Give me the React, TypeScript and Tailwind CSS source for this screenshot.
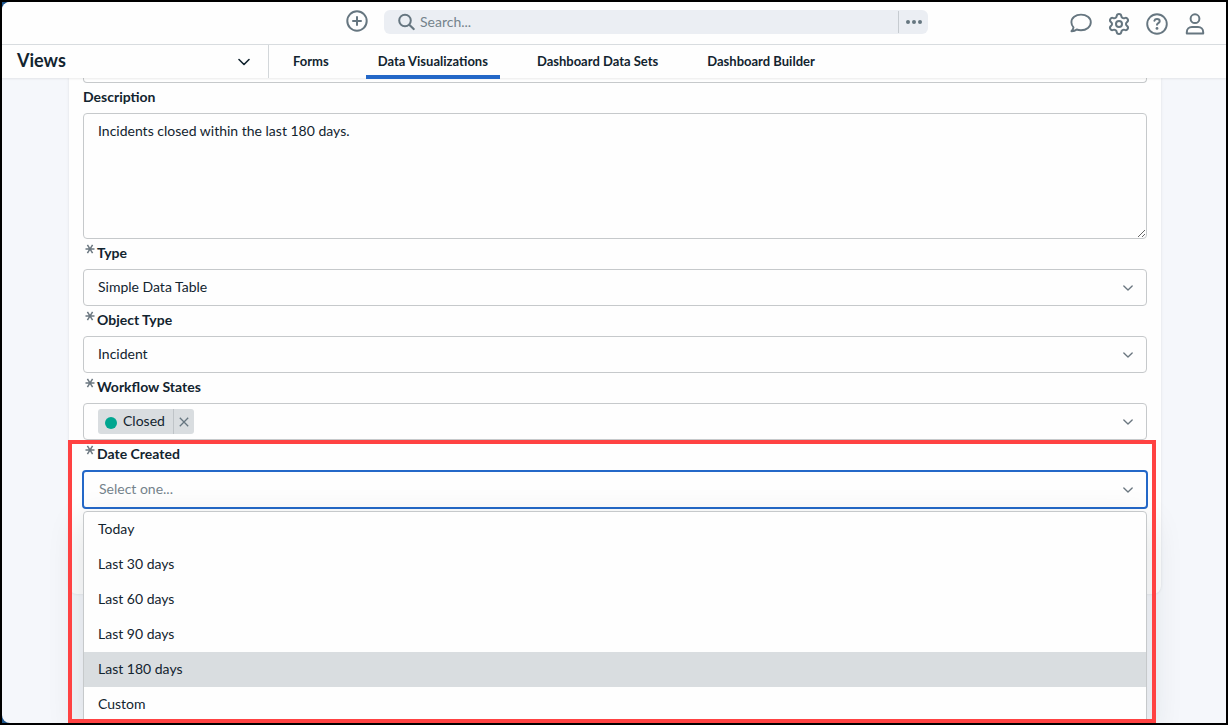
import { useState } from "react";
import type { ReactNode } from "react";
import clsx from "clsx";
import { Settings } from "lucide-react";

const TABS = [
  "Forms",
  "Data Visualizations",
  "Dashboard Data Sets",
  "Dashboard Builder",
];

const DATE_OPTIONS = [
  "Today",
  "Last 30 days",
  "Last 60 days",
  "Last 90 days",
  "Last 180 days",
  "Custom",
];

function Chevron({ className }: { className?: string }) {
  return (
    <svg
      viewBox="0 0 12 8"
      fill="none"
      stroke="currentColor"
      strokeLinecap="round"
      strokeLinejoin="round"
      className={className}
      aria-hidden="true"
    >
      <path d="M1 1.5l5 5 5-5" strokeWidth="1.6" />
    </svg>
  );
}

function PlusIcon() {
  return (
    <svg viewBox="0 0 24 24" fill="none" stroke="currentColor" strokeWidth="2" strokeLinecap="round" className="size-6">
      <circle cx="12" cy="12" r="9.7" />
      <path d="M12 8v8M8 12h8" />
    </svg>
  );
}

function SearchIcon() {
  return (
    <svg viewBox="0 0 18 18" fill="none" stroke="currentColor" strokeWidth="2" strokeLinecap="round" className="size-[18px] shrink-0">
      <circle cx="7" cy="7.5" r="5.8" />
      <path d="M11.5 12l4.2 4" strokeWidth="2.2" />
    </svg>
  );
}

function ChatIcon() {
  return (
    <svg viewBox="0 0 24 24" fill="none" stroke="currentColor" strokeWidth="1.9" strokeLinejoin="round" className="size-6">
      <path d="M12 2.6c-5.4 0-9.6 3.3-9.600 7.700 0 2 .8 3.700 2.100 5-.2 1.500-1 2.800-2.100 3.900 2.200.1 4-.6 5.300-1.700 1.300.5 2.800.7 4.300.7 5.500 0 9.800-3.500 9.800-7.900s-4.300-7.700-9.800-7.700z" />
    </svg>
  );
}

function HelpIcon() {
  return (
    <svg viewBox="0 0 24 24" fill="none" stroke="currentColor" strokeWidth="1.9" strokeLinecap="round" className="size-6">
      <circle cx="12" cy="12" r="9.8" />
      <path d="M9.4 8.800c.3-1.100 1.300-1.700 2.600-1.700 1.600 0 2.700.8 2.700 2.100 0 1.800-2.700 1.900-2.700 3.600" strokeWidth="2" />
      <circle cx="12" cy="16.4" r="1.4" fill="currentColor" stroke="none" />
    </svg>
  );
}

function UserIcon() {
  return (
    <svg viewBox="0 0 24 24" fill="none" stroke="currentColor" strokeWidth="2" strokeLinejoin="round" className="size-6">
      <circle cx="12" cy="6.7" r="4.4" />
      <path d="M3.8 21.6v-1.400c0-3 2.200-5.100 5.100-5.100h6.200c2.900 0 5.100 2.100 5.100 5.100v1.400z" />
    </svg>
  );
}

function FieldLabel({
  htmlFor,
  required,
  children,
}: {
  htmlFor: string;
  required?: boolean;
  children: ReactNode;
}) {
  return (
    <label htmlFor={htmlFor} className="flex h-[30px] items-center pb-0.5 font-bold">
      {required && (
        <svg
          viewBox="0 0 10 10"
          stroke="currentColor"
          strokeWidth="1.5"
          className="mr-0.5 mb-2 ml-0.5 size-2.5 text-[#6b7780]"
          aria-hidden="true"
        >
          <path d="M0.500 5h9M2.400 0.800l5.200 8.400M7.600 0.800l-5.200 8.400" />
        </svg>
      )}
      {children}
    </label>
  );
}

function SelectField({
  id,
  label,
  value,
}: {
  id: string;
  label: string;
  value: string;
}) {
  return (
    <div>
      <FieldLabel htmlFor={id} required>
        {label}
      </FieldLabel>
      <div className="relative">
        <select
          id={id}
          defaultValue={value}
          className="block h-[37px] w-full appearance-none rounded border border-[#c6c9cb] bg-[#fefefe] px-3.5 pb-0.5 outline-none"
        >
          <option>{value}</option>
        </select>
        <Chevron className="pointer-events-none absolute top-[15px] right-3.5 h-2 w-2.5 text-[#6b7780]" />
      </div>
    </div>
  );
}

function Header() {
  return (
    <header className="flex h-[43px] shrink-0 items-center border-b border-[#d9dde0] bg-[#fefefe] text-[#667680]">
      <div className="flex-1" />
      <div className="flex items-center gap-[15px] pb-0.5 pl-16">
        <button type="button" aria-label="Create" className="pb-0.5">
          <PlusIcon />
        </button>
        <div className="flex h-6 w-[544px] items-center rounded-md bg-[#ebeef3] pl-3.5">
          <SearchIcon />
          <input
            type="search"
            aria-label="Search"
            placeholder="Search..."
            className="ml-1 min-w-0 flex-1 bg-transparent text-sm outline-none placeholder:text-[#75838c]"
          />
          <button
            type="button"
            aria-label="Search options"
            className="flex h-[22px] w-[30px] items-center justify-center gap-0.5 border-l border-[#c6cbd0]"
          >
            <span className="size-1 rounded-full bg-current" />
            <span className="size-1 rounded-full bg-current" />
            <span className="size-1 rounded-full bg-current" />
          </button>
        </div>
      </div>
      <div className="flex flex-1 justify-end gap-3.5 pt-0.5 pr-[19px]">
        <button type="button" aria-label="Messages">
          <ChatIcon />
        </button>
        <button type="button" aria-label="Settings">
          <Settings className="size-6" strokeWidth={2} />
        </button>
        <button type="button" aria-label="Help">
          <HelpIcon />
        </button>
        <button type="button" aria-label="Account">
          <UserIcon />
        </button>
      </div>
    </header>
  );
}

function NavBar() {
  const [active, setActive] = useState("Data Visualizations");

  return (
    <nav className="relative flex h-[33px] shrink-0 bg-[#fefefe] shadow-[0_1px_2px_rgba(0,0,0,0.08)]">
      <button
        type="button"
        className="flex w-[267px] items-center justify-between border-r border-[#d3d7da] pr-[18px] pb-1 pl-[15px] text-lg font-bold"
      >
        Views
        <Chevron className="mt-1 h-2 w-3" />
      </button>
      <div className="-mb-px flex gap-[25px] pl-3 text-[13px] font-bold">
        {TABS.map((tab) => (
          <button
            key={tab}
            type="button"
            onClick={() => setActive(tab)}
            className={clsx(
              "border-b-4 px-3 pt-0.5",
              tab === active ? "border-[#2468c8]" : "border-transparent",
            )}
          >
            {tab}
          </button>
        ))}
      </div>
    </nav>
  );
}

function WorkflowStates() {
  const [closed, setClosed] = useState(true);

  return (
    <div>
      <FieldLabel htmlFor="workflow-states" required>
        Workflow States
      </FieldLabel>
      <div className="flex h-[37px] items-center rounded border border-[#c6c9cb] pr-[13px] pl-3.5">
        {closed && (
          <div className="flex h-[25px] shrink-0 items-center rounded-[3px] bg-[#d9dde0]">
            <span className="mt-0.5 mr-1.5 ml-[7px] size-3 rounded-full bg-[#00a690]" />
            <span className="pb-0.5">Closed</span>
            <button
              type="button"
              aria-label="Remove Closed"
              onClick={() => setClosed(false)}
              className="ml-2 flex h-full w-[21px] items-center justify-center border-l border-[#bfc4c8] text-[#667680]"
            >
              <svg viewBox="0 0 10 10" stroke="currentColor" strokeWidth="1.3" className="size-2.5">
                <path d="M0.800 0.800l8.400 8.400M9.200 0.800l-8.400 8.400" />
              </svg>
            </button>
          </div>
        )}
        <input id="workflow-states" className="ml-2 min-w-0 flex-1 outline-none" />
        <Chevron className="h-2 w-2.5 text-[#6b7780]" />
      </div>
    </div>
  );
}

function DateCreated() {
  const [value, setValue] = useState("");
  const [hovered, setHovered] = useState("Last 180 days");

  return (
    <div className="relative">
      <FieldLabel htmlFor="date-created" required>
        Date Created
      </FieldLabel>
      <div className="-mx-px flex h-[39px] items-center rounded border-2 border-[#2468c8] bg-[#fefefe] pr-[13px] pl-[15px]">
        <input
          id="date-created"
          role="combobox"
          aria-expanded="true"
          aria-controls="date-options"
          placeholder="Select one..."
          value={value}
          onChange={(e) => setValue(e.target.value)}
          className="min-w-0 flex-1 pb-0.5 outline-none placeholder:text-[#75838c]"
        />
        <Chevron className="h-2 w-2.5 text-[#6b7780]" />
      </div>
      <ul
        id="date-options"
        role="listbox"
        aria-label="Date Created"
        className="absolute inset-x-0 top-[71px] rounded border border-[#c6c9cb] bg-[#fefefe] shadow-[0_12px_36px_rgba(20,40,50,0.14)]"
      >
        {DATE_OPTIONS.map((option) => (
          <li
            key={option}
            role="option"
            aria-selected={option === value}
            onClick={() => setValue(option)}
            onMouseEnter={() => setHovered(option)}
            className={clsx(
              "flex h-[35px] items-center px-3.5 pb-0.5",
              option === hovered && "bg-[#d9dde0]",
            )}
          >
            {option}
          </li>
        ))}
      </ul>
      {/* Callout around the field and its open menu */}
      <div className="pointer-events-none absolute top-0 -right-[9px] -left-[15px] h-[283px] border-4 border-[#ff4242]" />
    </div>
  );
}

export default function App() {
  return (
    <div className="h-screen bg-black p-0.5 font-['Lato','Open_Sans',sans-serif] text-sm text-[#12242f]">
      <div className="h-full bg-[linear-gradient(to_right,#1f568c_12px,#000_12px)]">
        <div className="flex h-full flex-col overflow-hidden rounded-l-lg bg-[#f5f7fb]">
          <Header />
          <NavBar />
          <main className="min-h-0 flex-1 overflow-hidden">
            <form className="mr-[65px] ml-[67px] h-[516px] rounded-b-lg bg-[#fefefe] px-3.5 shadow-[0_0_3px_rgba(0,0,0,0.1)]">
              <div className="h-[5px] rounded-b border border-t-0 border-[#c6c9cb]" />
              <FieldLabel htmlFor="description">Description</FieldLabel>
              <textarea
                id="description"
                defaultValue="Incidents closed within the last 180 days."
                className="block h-[126px] w-full resize rounded border border-[#c6c9cb] px-3.5 py-[7px] outline-none"
              />
              <SelectField id="type" label="Type" value="Simple Data Table" />
              <SelectField id="object-type" label="Object Type" value="Incident" />
              <WorkflowStates />
              <DateCreated />
            </form>
          </main>
        </div>
      </div>
    </div>
  );
}
